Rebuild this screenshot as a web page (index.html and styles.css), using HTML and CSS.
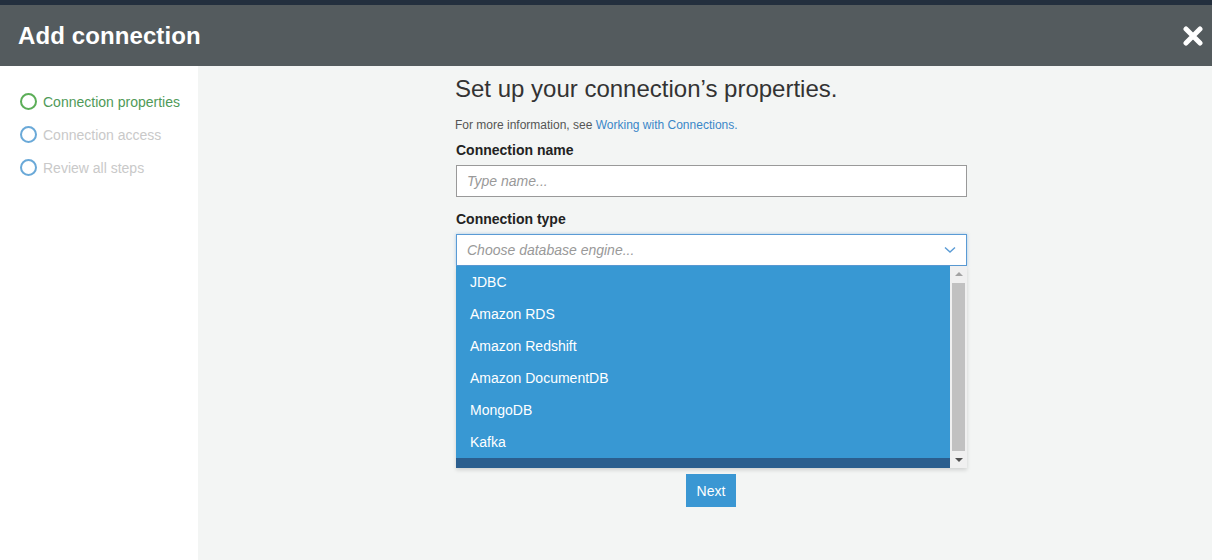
FILE: index.html
```html
<!DOCTYPE html>
<html>
<head>
<meta charset="utf-8">
<link rel="stylesheet" href="styles.css">
</head>
<body>
<div class="topstrip"></div>
<header class="header">
  <h1 class="title">Add connection</h1>
  <svg class="close" width="20" height="20" viewBox="0 0 20 20"><path d="M3 3 L17 17 M17 3 L3 17" stroke="#fff" stroke-width="5" stroke-linecap="round"/></svg>
</header>
<div class="body">
  <aside class="sidebar">
    <div class="step active"><span class="circle"></span>Connection properties</div>
    <div class="step"><span class="circle"></span>Connection access</div>
    <div class="step"><span class="circle"></span>Review all steps</div>
  </aside>
  <main class="main">
    <div class="form">
      <h2 class="heading">Set up your connection’s properties.</h2>
      <p class="info">For more information, see <a class="link">Working with Connections.</a></p>
      <div class="label">Connection name</div>
      <div class="input"><span class="ph">Type name...</span></div>
      <div class="label label2">Connection type</div>
      <div class="select-wrap">
        <div class="select"><span class="ph">Choose database engine...</span>
          <svg class="chev" width="12" height="8" viewBox="0 0 12 8"><path d="M1 1.5 L6 6 L11 1.5" fill="none" stroke="#5a9bd5" stroke-width="1.4"/></svg>
        </div>
        <div class="dropdown">
          <div class="options">
            <div class="opt">JDBC</div>
            <div class="opt">Amazon RDS</div>
            <div class="opt">Amazon Redshift</div>
            <div class="opt">Amazon DocumentDB</div>
            <div class="opt">MongoDB</div>
            <div class="opt">Kafka</div>
            <div class="opt sel"></div>
          </div>
          <div class="scrollbar">
            <div class="arrow up"></div>
            <div class="thumb"></div>
            <div class="arrow down"></div>
          </div>
        </div>
      </div>
      <div class="actions"><button class="next">Next</button></div>
    </div>
  </main>
</div>
</body>
</html>
```
FILE: styles.css
```css
* { box-sizing: border-box; }
html, body { margin: 0; padding: 0; height: 100%; }
body {
  font-family: "Liberation Sans", Arial, sans-serif;
  background: #f3f5f4;
  display: flex;
  flex-direction: column;
  overflow: hidden;
}
.topstrip { height: 5px; background: #232f3e; flex: none; }
.header {
  height: 61px;
  flex: none;
  background: #545b5e;
  display: flex;
  align-items: center;
  justify-content: space-between;
  padding: 0 9px 0 18px;
}
.title {
  margin: 0;
  color: #fff;
  font-size: 24px;
  font-weight: bold;
  letter-spacing: 0.1px;
}
.close { margin-top: 0; }
.body { flex: 1; display: flex; }
.sidebar {
  width: 198px;
  background: #fff;
  padding-top: 19px;
  padding-left: 20px;
}
.step {
  display: flex;
  align-items: center;
  height: 33px;
  font-size: 14px;
  color: #c9c9c9;
}
.circle {
  width: 17px;
  height: 17px;
  border-radius: 50%;
  border: 2px solid #6aa9d8;
  margin-right: 6px;
  flex: none;
}
.step.active { color: #4f9a58; }
.step.active .circle { border-color: #5cae58; }
.main { flex: 1; background: #f3f5f4; }
.form {
  width: 512px;
  margin-left: 257px;
  padding-top: 10px;
}
.heading {
  margin: 0;
  font-size: 24px;
  font-weight: normal;
  line-height: 26px;
  color: #333;
}
.info {
  margin: 15px 0 0;
  font-size: 12px;
  line-height: 16px;
  color: #555;
}
.link { color: #3a87c8; }
.label {
  margin-top: 8px;
  font-size: 14px;
  font-weight: bold;
  line-height: 18px;
  color: #222;
  padding-left: 1px;
}
.label2 { margin-top: 13px; }
.input, .select {
  margin-top: 6px;
  margin-left: 1px;
  height: 32px;
  background: #fff;
  border: 1px solid #999;
  display: flex;
  align-items: center;
  padding-left: 10px;
}
.ph { font-size: 14px; font-style: italic; color: #999; }
.select-wrap { position: relative; }
.select {
  border-color: #5a9bd5;
  box-shadow: 0 0 3px rgba(90, 155, 213, 0.5);
  justify-content: space-between;
  padding-right: 10px;
}
.dropdown {
  position: absolute;
  top: 32px;
  left: 1px;
  width: 511px;
  height: 202px;
  display: flex;
  background: #f0f0f0;
  box-shadow: 0 2px 4px rgba(0,0,0,0.15);
  overflow: hidden;
}
.options { flex: 1; }
.opt {
  height: 32px;
  line-height: 32px;
  background: #3898d3;
  color: #fff;
  font-size: 14px;
  padding-left: 14px;
}
.opt.sel { background: #2b5e8e; }
.scrollbar {
  width: 17px;
  background: #f0f0f0;
  display: flex;
  flex-direction: column;
  align-items: center;
}
.arrow { width: 0; height: 0; border-left: 4px solid transparent; border-right: 4px solid transparent; }
.arrow.up { border-bottom: 4px solid #a3a3a3; margin: 6px 0 7px; }
.arrow.down { border-top: 4px solid #505050; margin: 7px 0 6px; }
.thumb { width: 13px; flex: 1; background: #c1c1c1; }
.actions {
  margin-top: 208px;
  display: flex;
  justify-content: center;
}
.next {
  width: 50px;
  height: 33px;
  border: none;
  background: #3a97d3;
  color: #fff;
  font-family: "Liberation Sans", Arial, sans-serif;
  font-size: 14px;
  padding: 0;
}
```
